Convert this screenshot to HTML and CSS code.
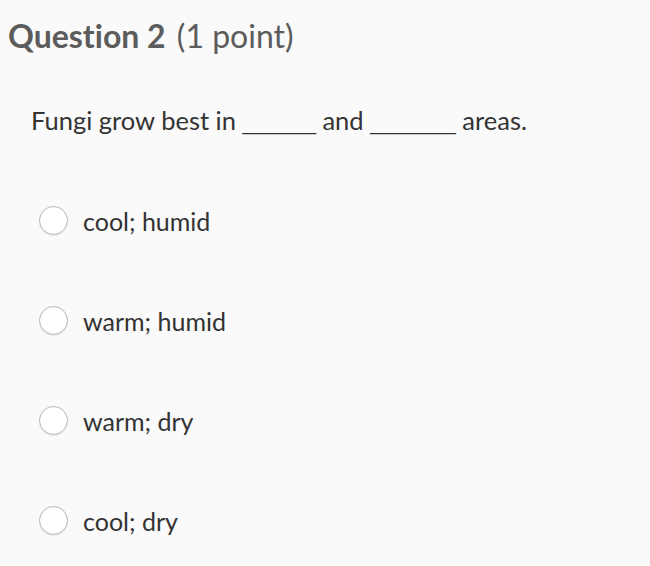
FILE: index.html
```html
<!DOCTYPE html>
<html lang="en">
<head>
<meta charset="utf-8">
<title>Question 2</title>
<link rel="stylesheet" href="styles.css">
</head>
<body>
<div class="question">
  <h2 class="q-title"><strong>Question 2</strong> <span class="points">(1 point)</span></h2>
  <p class="q-text">Fungi grow best in <span class="blank">______</span> and <span class="blank">_______</span> areas.</p>
  <ul class="options">
    <li class="option"><span class="radio"></span><span class="label">cool; humid</span></li>
    <li class="option"><span class="radio"></span><span class="label">warm; humid</span></li>
    <li class="option"><span class="radio"></span><span class="label">warm; dry</span></li>
    <li class="option"><span class="radio"></span><span class="label">cool; dry</span></li>
  </ul>
</div>
</body>
</html>
```
FILE: styles.css
```css
html, body {
  margin: 0;
  padding: 0;
  background: #fafafa;
}
body {
  font-family: Lato, "Open Sans", sans-serif;
  color: #333;
  font-variant-ligatures: none;
}
.question {
  padding: 14px 0 0 8px;
}
.q-title {
  margin: 0;
  font-size: 32px;
  line-height: 44px;
  font-weight: normal;
  color: #5c5c5c;
}
.q-title strong {
  font-weight: bold;
  margin-right: 3px;
}
.q-text {
  margin: 45px 0 0 23px;
  font-size: 25.5px;
  line-height: 34px;
}
.blank {
  font-family: "Liberation Sans", sans-serif;
  font-size: 22px;
  line-height: 0;
}
.options {
  list-style: none;
  margin: 68px 0 0 31px;
  padding: 0;
}
.option {
  display: flex;
  align-items: center;
  height: 100px;
}
.option:first-child {
  margin-top: -35px;
}
.radio {
  width: 27px;
  height: 27px;
  border-radius: 50%;
  border: 1px solid #b5b5b5;
  background: radial-gradient(circle at 50% 40%, #fff 60%, #f2f2f2 100%);
  box-shadow: 0 1px 1px rgba(0,0,0,0.08);
  flex: none;
}
.label {
  margin-left: 15px;
  font-size: 25px;
  line-height: 34px;
  position: relative;
  top: 1px;
}
```
